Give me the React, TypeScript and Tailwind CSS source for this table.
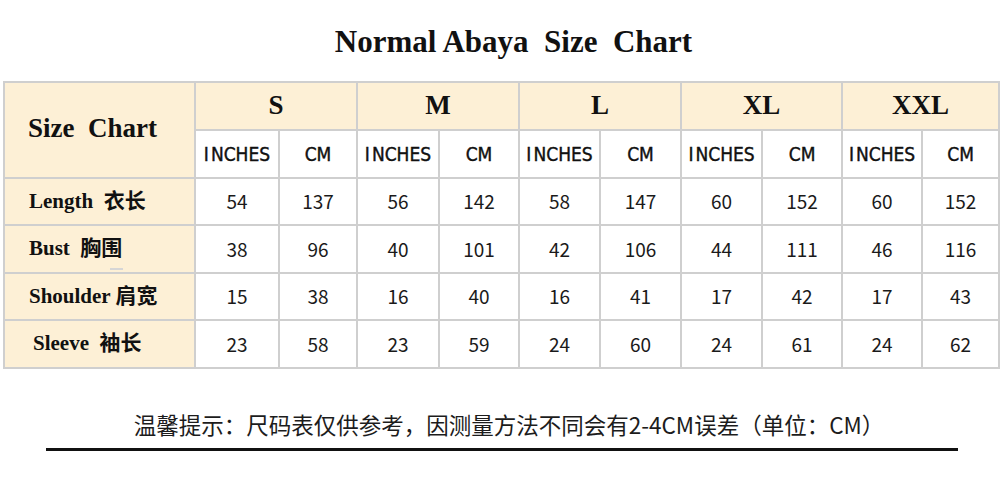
import React from "react";

const sizes = ["S", "M", "L", "XL", "XXL"];

// inches / cm pairs per size
const rows = [
  { label: "Length", cn: "衣长", gap: true, values: [54, 137, 56, 142, 58, 147, 60, 152, 60, 152] },
  { label: "Bust", cn: "胸围", gap: true, values: [38, 96, 40, 101, 42, 106, 44, 111, 46, 116] },
  { label: "Shoulder", cn: "肩宽", gap: false, values: [15, 38, 16, 40, 16, 41, 17, 42, 17, 43] },
  { label: "Sleeve", cn: "袖长", gap: true, values: [23, 58, 23, 59, 24, 60, 24, 61, 24, 62] },
];

const colWidths = [84, 78, 82, 80, 81, 81, 81, 80, 80, 77];
const rowHeights = ["h-[47px]", "h-[48px]", "h-[47px]", "h-[48px]"];

const serif = "font-['Liberation_Serif','Noto_Sans_CJK_SC',serif]";
const cell = "border-2 border-[#cfcfcf] p-0 text-center align-middle";
const narrow = "font-['DejaVu_Sans',sans-serif] font-stretch-condensed";

const App = () => {
  return (
    <div className="w-[1000px] h-[489px] bg-white overflow-hidden flex flex-col">
      <h1
        className={`${serif} mt-[23px] h-[38px] text-center text-[31px] font-bold leading-[38px] text-[#111] pl-[27px] whitespace-pre`}
      >
        {"Normal Abaya  Size  Chart"}
      </h1>

      <div className="mt-[20px] pl-[3px]">
        <table className="border-collapse table-fixed w-[995px]">
          <colgroup>
            <col style={{ width: 191 }} />
            {colWidths.map((w, i) => (
              <col key={i} style={{ width: w }} />
            ))}
          </colgroup>
          <thead>
            <tr className="h-[48px]">
              <th
                rowSpan={2}
                className={`${cell} ${serif} bg-[#fdf0d6] text-left pl-[23px] pb-[4px] text-[27px] font-bold text-[#111] whitespace-pre`}
              >
                {"Size  Chart"}
              </th>
              {sizes.map((s) => (
                <th
                  key={s}
                  colSpan={2}
                  className={`${cell} ${serif} bg-[#fdf0d6] text-[27px] font-bold text-[#111] pb-[2px]`}
                >
                  {s}
                </th>
              ))}
            </tr>
            <tr className="h-[48px]">
              {sizes.map((s) => (
                <React.Fragment key={s}>
                  <th className={`${cell} ${narrow} text-[19px] font-normal text-[#111] [-webkit-text-stroke:0.4px_#111]`}>
                    <span className="mr-[2px]">I</span>NCHES
                  </th>
                  <th className={`${cell} ${narrow} text-[19px] font-normal text-[#111] [-webkit-text-stroke:0.4px_#111]`}>
                    CM
                  </th>
                </React.Fragment>
              ))}
            </tr>
          </thead>
          <tbody>
            {rows.map((row, ri) => (
              <tr key={row.label} className={rowHeights[ri]}>
                <td
                  className={`${cell} ${serif} bg-[#fdf0d6] text-left ${
                    row.label === "Sleeve" ? "pl-[28px]" : "pl-[24px]"
                  } text-[21px] font-bold text-[#111]`}
                >
                  <div className="relative whitespace-pre">
                    {row.label}
                    {row.gap ? "  " : " "}
                    {row.cn}
                    {row.label === "Bust" && (
                      <span className="absolute left-[81px] top-[35px] h-[2px] w-[13px] bg-[#d6d6d6]" />
                    )}
                  </div>
                </td>
                {row.values.map((v, i) => (
                  <td
                    key={i}
                    className={`${cell} font-['Noto_Sans_CJK_SC','Open_Sans',sans-serif] text-[19px] text-[#1a1a1a]`}
                  >
                    {v}
                  </td>
                ))}
              </tr>
            ))}
          </tbody>
        </table>
      </div>

      <p className="mt-[40px] h-[30px] text-center text-[22.5px] leading-[30px] text-[#1c1c1c] font-['Noto_Sans_CJK_SC',sans-serif] pl-[18px]">
        温馨提示：尺码表仅供参考，因测量方法不同会有2-4CM误差（单位：CM）
      </p>
      <div className="mt-[9px] ml-[46px] w-[912px] h-[3px] bg-[#111]" />
    </div>
  );
};

export default App;
